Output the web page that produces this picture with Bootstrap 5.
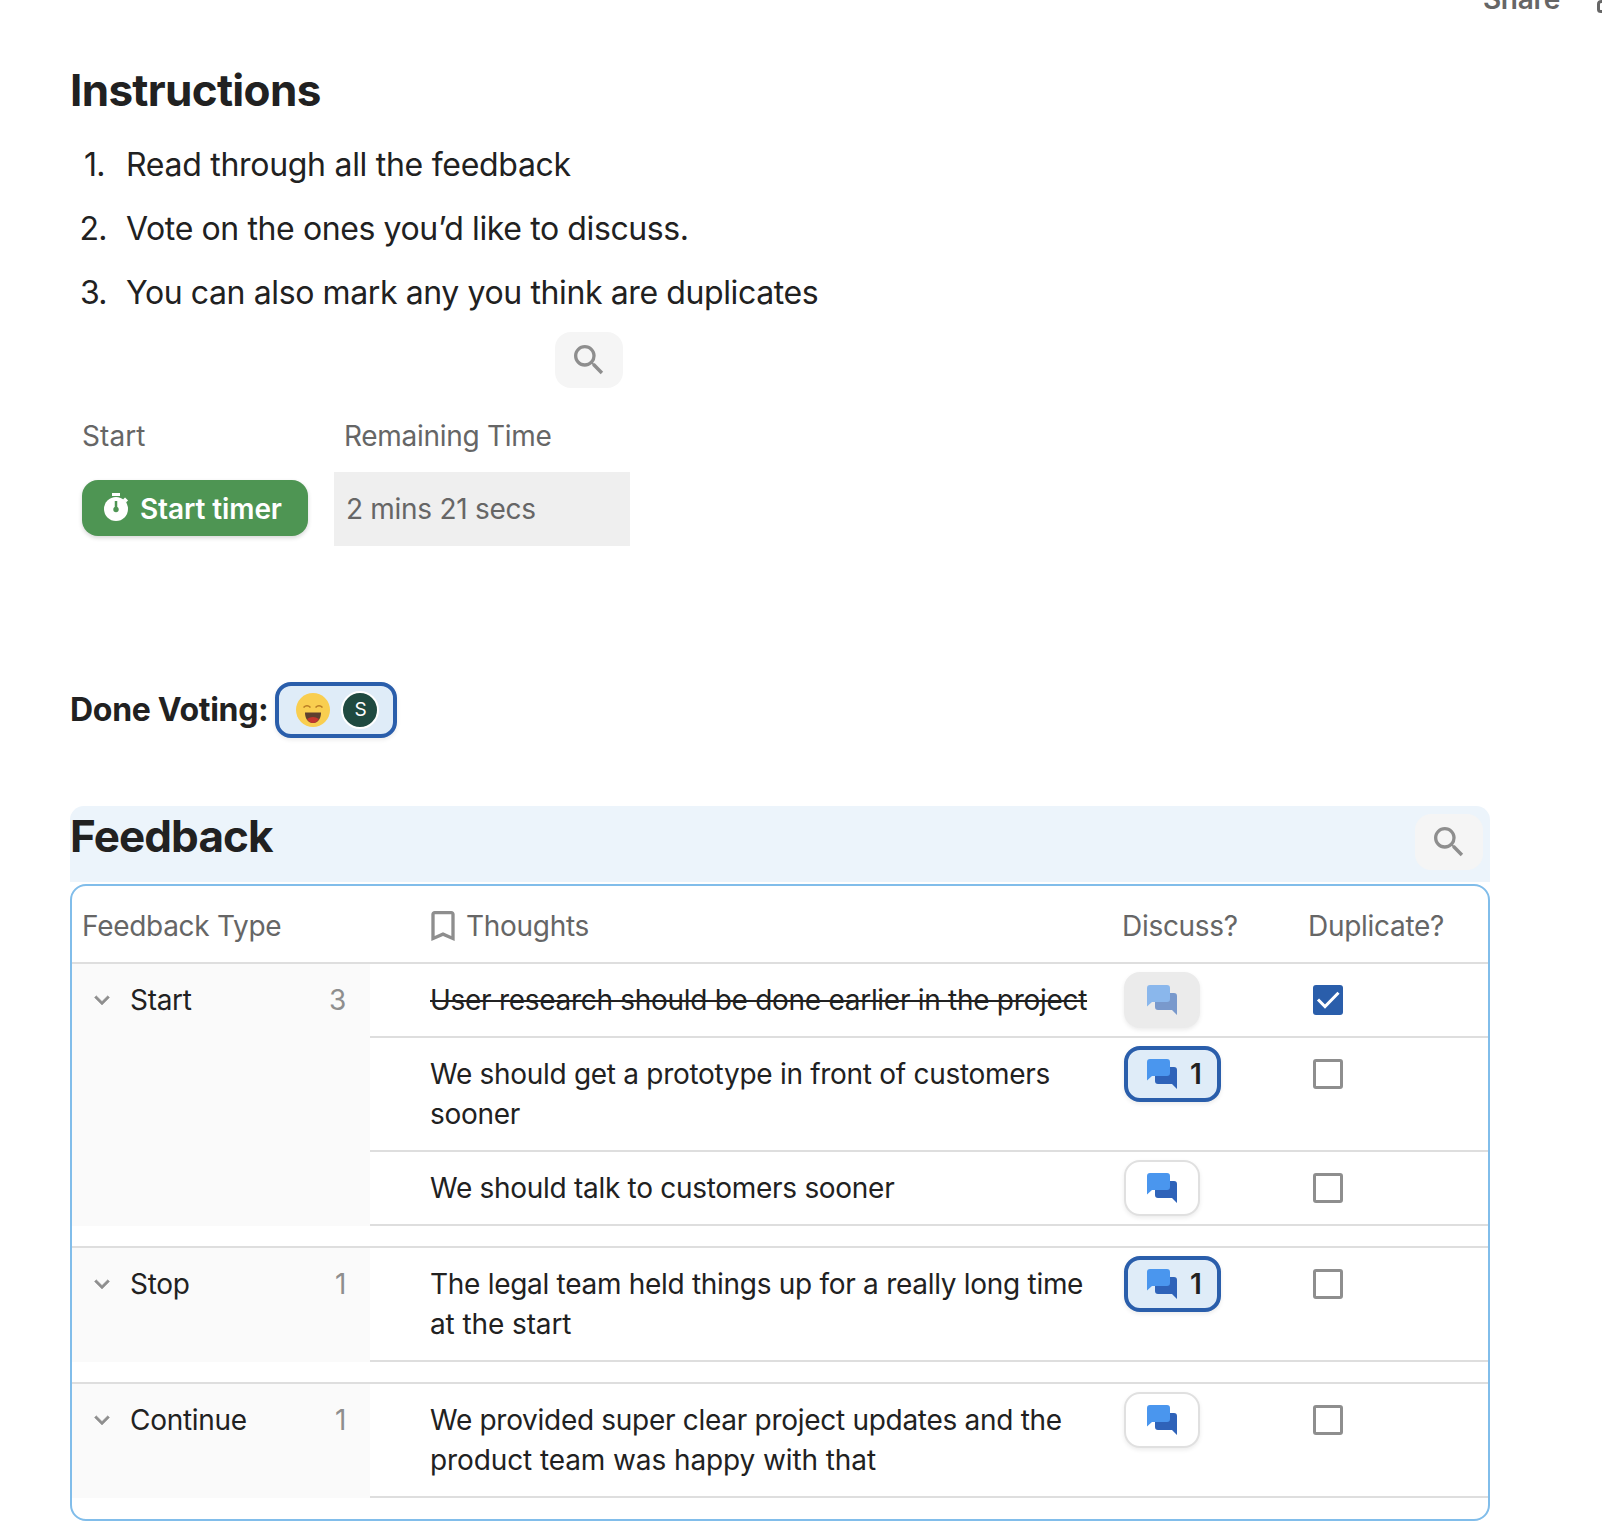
<!DOCTYPE html>
<html lang="en">
<head>
<meta charset="utf-8">
<title>Feedback</title>
<link href="https://cdn.jsdelivr.net/npm/bootstrap@5.3.0/dist/css/bootstrap.min.css" rel="stylesheet">
<style>
  body { font-family: Inter, "Liberation Sans", sans-serif; font-size: 28px; line-height: 40px; letter-spacing: -.29px; color: #212121; background: #fff; height: 1526px; overflow: hidden; }
  h2 { font-size: 44px; line-height: 52px; font-weight: 700; letter-spacing: -.9px; color: #212121; }
  svg { display: block; flex: none; }
  .ic { width: 40px; height: 40px; fill: currentColor; }
  .topbar { height: 60px; color: #666; font-weight: 600; }
  .topbar span { margin: -21px 36px 0 0; }
  .doc { width: 1420px; margin-left: 70px; }
  .title-wide { letter-spacing: -.68px; }
  .steps { font-size: 32px; line-height: 64px; margin: 17px 0 7px; letter-spacing: -.39px; }
  .steps li:first-child { letter-spacing: -.29px; }
  .steps .num { width: 37px; margin-right: 19px; text-align: right; letter-spacing: -.6px; }
  .steps li:first-child .num { width: 35px; margin-right: 21px; }
  .grey { color: #666; }
  .find { width: 68px; height: 56px; border-radius: 16px; background: #f5f5f5; color: #8e8e8e; }
  .timer-bar { width: 553px; }
  .timer-grid { display: grid; grid-template-columns: 264px 296px; margin-top: 28px; }
  .timer-grid .lbl { padding: 0 10px; height: 56px; }
  .timer-grid .lbl:first-child { padding-left: 12px; letter-spacing: .1px; }
  .timer-btn { width: 226px; height: 56px; border-radius: 16px; background: #4e9553; color: #fff; font-weight: 600; letter-spacing: -.1px; margin: 8px 0 0 12px; padding: 1px 0 0 17px; gap: 5px; box-shadow: 0 2px 4px rgba(0,0,0,.16); white-space: nowrap; }
  .remain { background: #efefef; height: 74px; padding: 17px 12px; }
  .voting { font-size: 32px; font-weight: 700; margin-top: 136px; height: 56px; letter-spacing: -.3px; }
  .chip { height: 56px; border: 4px solid #2a5eab; border-radius: 16px; background: #dfecf8; box-shadow: 0 2px 4px rgba(0,0,0,.08); }
  .vote-chip { width: 122px; padding-left: 17px; gap: 11px; margin-left: 7px; }
  .avatar { width: 38px; height: 38px; border-radius: 50%; border: 2px solid #fff; background: #1f4a40; color: #fff; font-size: 19px; font-weight: 400; letter-spacing: 0; }
  .band { height: 76px; margin-top: 68px; background: #ecf4fb; border-radius: 14px 14px 0 0; padding: 4px 7px 0 0; }
  .board { border: 2px solid #81bdea; border-radius: 16px; height: 637px; margin-top: 2px; overflow: hidden; }
  .cols { display: grid; grid-template-columns: 350px 700px 184px 1fr; }
  .head { height: 78px; padding-top: 20px; border-bottom: 2px solid #dedede; color: #666; }
  .head .type { padding-left: 10px; }
  .head .mark-ic { color: #8e8e8e; margin: 0 -1px 0 1px; }
  .head .dup { padding-left: 2px; }
  .group + .group { margin-top: 20px; border-top: 2px solid #dedede; }
  .side { width: 298px; background: #fafafa; padding: 16px 24px 0 15px; }
  .side .ic { width: 30px; height: 30px; color: #8e8e8e; margin: 5px 13px 0 0; stroke: currentColor; stroke-width: .4; }
  .cnt { color: #8e8e8e; }
  .line { display: grid; grid-template-columns: 754px 184px 1fr; border-bottom: 2px solid #dedede; }
  .idea { padding: 16px 30px 16px 60px; white-space: nowrap; }
  .idea s { text-decoration-thickness: 2px; }
  .tail { letter-spacing: -.1px; }
  .act { padding-top: 8px; }
  .btn-talk { width: 76px; border: 2px solid #e0e0e0; background: #fff; }
  .btn-on { width: 97px; border: 4px solid #2a5eab; background: #dfecf8; padding-left: 14px; font-weight: 600; gap: 8px; }
  .btn-off { background: #ebebeb; border-color: #ebebeb; }
  .btn-off svg { opacity: .6; }
  .tick { padding-top: 16px; }
</style>
<script src="https://cdn.jsdelivr.net/npm/bootstrap@5.3.0/dist/js/bootstrap.bundle.min.js"></script>
</head>
<body>
<svg width="0" height="0" class="position-absolute">
  <symbol id="search" viewBox="0 0 24 24"><path d="M15.5 14h-.79l-.28-.27A6.47 6.47 0 0 0 16 9.5 6.5 6.5 0 1 0 9.5 16c1.61 0 3.09-.59 4.23-1.57l.27.28v.79l5 4.99L20.49 19l-4.99-5zm-6 0C7.01 14 5 11.99 5 9.5S7.01 5 9.5 5 14 7.01 14 9.5 11.99 14 9.5 14z"/></symbol>
  <symbol id="down" viewBox="0 0 24 24"><path d="M16.59 8.59 12 13.17 7.41 8.59 6 10l6 6 6-6z"/></symbol>
  <symbol id="talk" viewBox="0 0 40 40"><path fill="#2f63b9" d="M15 13h17q3 0 3 3v19l-5-5H16q-3 0-3-3V15z"/><path fill="#4a96ee" d="M8 5h17q3 0 3 3v11q0 3-3 3H10l-5 4.500V8q0-3 3-3z"/></symbol>
  <symbol id="box" viewBox="0 0 40 40"><rect x="6.500" y="6.500" width="27" height="27" rx="1.500" fill="none" stroke="#8e8e8e" stroke-width="3"/></symbol>
  <symbol id="checked" viewBox="0 0 40 40"><rect x="5" y="5" width="30" height="30" rx="3" fill="#2a5eab"/><path d="M10 19.500l7 7 13.500-13.700" fill="none" stroke="#fff" stroke-width="3"/></symbol>
</svg>

<header class="topbar d-flex justify-content-end">
  <span>Share</span>
  <svg width="6" height="14" viewBox="0 0 6 14"><path d="M8 1.500H5.500Q2.500 1.500 2.500 4v5.500q0 2 2.500 2H8" fill="none" stroke="#666" stroke-width="3"/></svg>
</header>

<main class="doc">
  <h2 class="title-wide m-0 pt-1">Instructions</h2>
  <ol class="steps list-unstyled">
    <li class="d-flex"><span class="num">1.</span>Read through all the feedback</li>
    <li class="d-flex"><span class="num">2.</span>Vote on the ones you’d like to discuss.</li>
    <li class="d-flex"><span class="num">3.</span>You can also mark any you think are duplicates</li>
  </ol>

  <section>
    <div class="timer-bar d-flex justify-content-end"><div class="find d-flex align-items-center justify-content-center"><svg class="ic"><use href="#search"/></svg></div></div>
    <div class="timer-grid">
      <div class="lbl grey">Start</div><div class="lbl grey">Remaining Time</div>
      <div><button class="timer-btn border-0 d-flex align-items-center">
        <svg width="36" height="36" viewBox="0 0 36 36"><path fill="#fff" d="M13 2h8v3h-8z"/><circle cx="17" cy="18" r="12" fill="#fff"/><path d="M25 7.500l3 3" stroke="#fff" stroke-width="3"/><path d="M17 10v8" stroke="#4e9553" stroke-width="2.500"/><circle cx="17" cy="18.500" r="2.700" fill="#4e9553"/></svg>
        Start timer</button></div>
      <div class="remain grey">2 mins 21 secs</div>
    </div>
  </section>

  <section class="voting d-flex align-items-center">
    <span>Done Voting:</span>
    <div class="chip vote-chip d-flex align-items-center">
      <svg width="34" height="34" viewBox="0 0 34 34"><circle cx="17" cy="17" r="17" fill="#f9ce50"/><path d="M7.500 14.500q3.500-3.500 7 0M19.500 14.500q3.500-3.500 7 0" fill="none" stroke="#b97d24" stroke-width="1.600"/><path d="M9 19.500h16c0 6-3 10.500-8 10.500s-8-4.500-8-10.500z" fill="#5e402f"/><path d="M11 26q6-4 12 0-2.500 4-6 4t-6-4z" fill="#c3362d"/></svg>
      <span class="avatar d-flex align-items-center justify-content-center">S</span>
    </div>
  </section>

  <section>
    <div class="band d-flex justify-content-between">
      <h2 class="m-0">Feedback</h2>
      <div class="find mt-1 d-flex align-items-center justify-content-center"><svg class="ic"><use href="#search"/></svg></div>
    </div>
    <div class="board">
      <div class="head cols">
        <div class="type">Feedback Type</div>
        <div class="d-flex"><svg class="ic mark-ic" viewBox="0 0 24 24"><path d="M17 3H7c-1.100 0-2 .9-2 2v16l7-3 7 3V5c0-1.100-.9-2-2-2zm0 15-5-2.180L7 18V5h10v13z"/></svg><span class="ps-1">Thoughts</span></div>
        <div>Discuss?</div>
        <div class="dup">Duplicate?</div>
      </div>
      <div class="group d-flex">
        <div class="side d-flex"><svg class="ic"><use href="#down"/></svg><span class="me-auto">Start</span><span class="cnt">3</span></div>
        <div class="flex-grow-1">
          <div class="line"><div class="idea"><s>User research should be done earlier in the project</s></div><div class="act"><div class="chip btn-talk btn-off d-flex align-items-center justify-content-center"><svg class="ic"><use href="#talk"/></svg></div></div><div class="tick"><svg class="ic"><use href="#checked"/></svg></div></div>
          <div class="line"><div class="idea">We should get a prototype in front of customers<br>sooner</div><div class="act"><div class="chip btn-on d-flex align-items-center"><svg class="ic"><use href="#talk"/></svg>1</div></div><div class="tick"><svg class="ic"><use href="#box"/></svg></div></div>
          <div class="line"><div class="idea">We should talk to customers sooner</div><div class="act"><div class="chip btn-talk d-flex align-items-center justify-content-center"><svg class="ic"><use href="#talk"/></svg></div></div><div class="tick"><svg class="ic"><use href="#box"/></svg></div></div>
        </div>
      </div>
      <div class="group d-flex">
        <div class="side d-flex"><svg class="ic"><use href="#down"/></svg><span class="me-auto">Stop</span><span class="cnt">1</span></div>
        <div class="flex-grow-1">
          <div class="line"><div class="idea">The legal team held things up for a really long time<br><span class="tail">at the start</span></div><div class="act"><div class="chip btn-on d-flex align-items-center"><svg class="ic"><use href="#talk"/></svg>1</div></div><div class="tick"><svg class="ic"><use href="#box"/></svg></div></div>
        </div>
      </div>
      <div class="group d-flex">
        <div class="side d-flex"><svg class="ic"><use href="#down"/></svg><span class="me-auto">Continue</span><span class="cnt">1</span></div>
        <div class="flex-grow-1">
          <div class="line"><div class="idea">We provided super clear project updates and the<br><span class="tail">product team was happy with that</span></div><div class="act"><div class="chip btn-talk d-flex align-items-center justify-content-center"><svg class="ic"><use href="#talk"/></svg></div></div><div class="tick"><svg class="ic"><use href="#box"/></svg></div></div>
        </div>
      </div>
    </div>
  </section>
</main>
</body>
</html>
